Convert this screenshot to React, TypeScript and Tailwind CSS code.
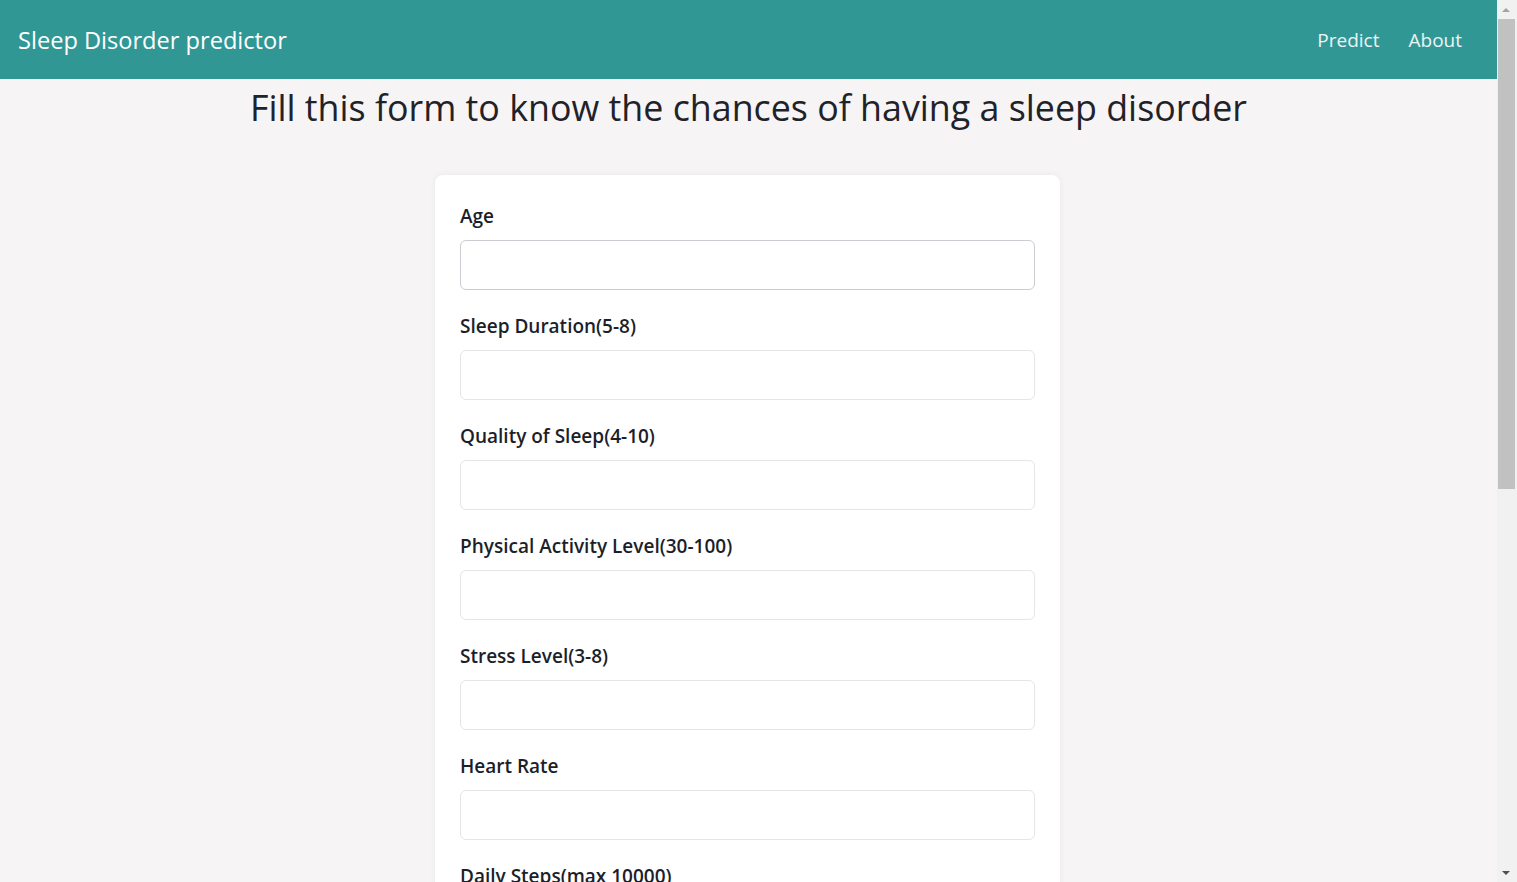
const FIELDS = [
  'Age',
  'Sleep Duration(5-8)',
  'Quality of Sleep(4-10)',
  'Physical Activity Level(30-100)',
  'Stress Level(3-8)',
  'Heart Rate',
  'Daily Steps(max 10000)',
  'Gender',
  'BMI Category',
];

export default function App() {
  return (
    <div className="flex h-screen overflow-hidden font-['Open_Sans',sans-serif] text-[#212529]">
      {/* page */}
      <div className="h-full w-[1497px] shrink-0 overflow-hidden bg-[#f6f4f5]">
        <nav className="flex h-[79px] items-center justify-between bg-[#319795] pt-[2px] pl-[18px] pr-[35px]">
          <a href="#" className="text-[23.6px] text-white">
            Sleep Disorder predictor
          </a>
          <div className="flex items-center gap-[29px] text-[19px] text-white/90">
            <a href="#">Predict</a>
            <a href="#">About</a>
          </div>
        </nav>

        <h1 className="mt-[7px] text-center text-[35.8px] leading-[1.2] text-[#1f2329]">
          Fill this form to know the chances of having a sleep disorder
        </h1>

        {/* form card */}
        <div className="mt-[46px] flex justify-center pr-[2px]">
          <div className="w-[625px] rounded-[8px] bg-white px-[25px] pt-[26px] pb-[30px] shadow-[0_0_6px_rgba(0,0,0,0.06)]">
            <form onSubmit={(e) => e.preventDefault()} className="flex flex-col">
              {FIELDS.map((label, i) => (
                <div key={label} className="mb-[21px]">
                  <label className="mb-[9px] block pt-[1px] text-[19px] font-semibold leading-[29px] text-[#1c1f2a]">
                    {label}
                  </label>
                  <input
                    type="text"
                    className={[
                      'block h-[50px] w-full rounded-[6px] border bg-white px-3 outline-none',
                      i === 0 ? 'border-[#c9cdd1]' : 'border-[#e3e5e8]',
                    ].join(' ')}
                  />
                </div>
              ))}
              <button className="mt-2 h-[48px] rounded-[6px] bg-[#319795] text-[18px] text-white">Predict</button>
            </form>
          </div>
        </div>
      </div>

      {/* scrollbar */}
      <div className="flex h-full w-[20px] flex-col bg-[#f1f1f1]">
        <div className="flex h-[19px] items-center justify-center pr-[2px]">
          <span className="h-0 w-0 border-x-[4px] border-b-[4px] border-x-transparent border-b-[#a3a3a3]" />
        </div>
        <div className="flex flex-1 flex-col">
          <div className="ml-[1px] h-[470px] w-[17px] bg-[#c1c1c1]" />
        </div>
        <div className="flex h-[19px] items-center justify-center pr-[2px]">
          <span className="h-0 w-0 border-x-[4px] border-t-[4px] border-x-transparent border-t-[#505050]" />
        </div>
      </div>
    </div>
  );
}
